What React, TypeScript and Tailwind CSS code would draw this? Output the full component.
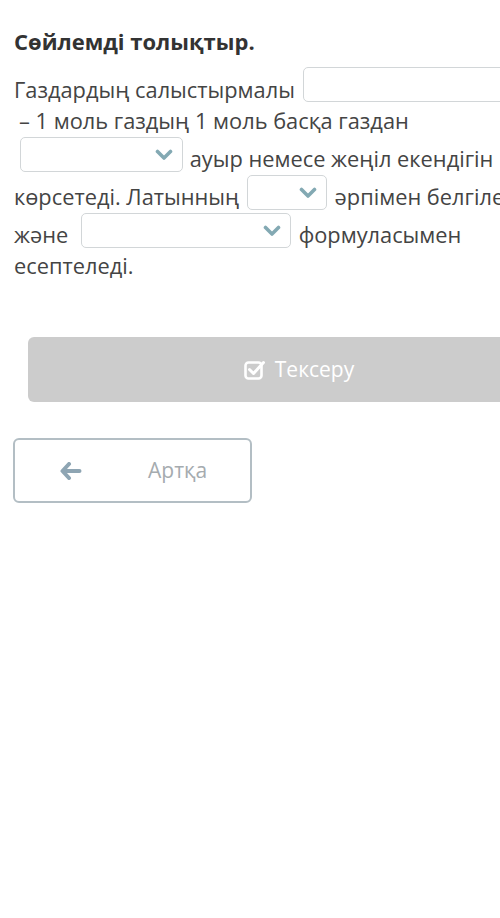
import React from "react";

function Chevron() {
  return (
    <svg width="18" height="12" viewBox="0 0 18 12" className="absolute right-[9px] top-[11px]">
      <path d="M2.5 2.5 L9 9 L15.5 2.5" fill="none" stroke="#83a9b3" strokeWidth="3.6" strokeLinecap="round" strokeLinejoin="round" />
    </svg>
  );
}

function Select({ w }: { w: string }) {
  return (
    <span className={`relative inline-block h-[35px] my-[1px] align-[-6px] rounded-[5px] border border-[#d2d6d8] bg-white ${w}`}>
      <Chevron />
    </span>
  );
}

export default function App() {
  return (
    <div className="w-[500px] h-[918px] overflow-hidden bg-white" style={{ fontFamily: '"Open Sans", sans-serif' }}>
      <div className="w-[600px] pl-[14px] pt-[26px]">
        <h1 className="text-[22px] font-bold text-[#333] leading-[30px]">Сөйлемді толықтыр.</h1>
        <p className="mt-[10px] w-[551px] text-[21.8px] leading-[31px] text-[#444]">
          Газдардың салыстырмалы{" "}
          <span className="ml-[2px] inline-block h-[35px] w-[250px] my-[1px] align-[-5px] rounded-[5px] border border-[#d2d6d8] bg-white"></span>{" "}
          <span className="ml-[5px]">– 1 моль газдың 1 моль басқа газдан</span>{" "}
          <Select w="w-[163px] ml-[6px] mr-[1px]" /> ауыр немесе жеңіл екендігін көрсетеді. Латынның{" "}
          <Select w="w-[80px] mx-[2px]" /> әрпімен белгіленеді және{" "}
          <Select w="w-[210px] ml-[7px] mr-[2px]" /> формуласымен есептеледі.
        </p>
        <button className="mt-[56px] ml-[14px] flex h-[65px] w-[542px] items-center justify-center gap-[9px] rounded-[6px] bg-[#cccccc] text-[21px] text-white">
          <svg width="22" height="20" viewBox="0 0 22 20">
            <rect x="1.5" y="2.5" width="16" height="16" rx="3" fill="none" stroke="white" strokeWidth="2.6" />
            <path d="M5.5 9.5 L9.5 13.5 L19.5 2.5" fill="none" stroke="white" strokeWidth="3" strokeLinecap="round" strokeLinejoin="round" />
          </svg>
          <span>Тексеру</span>
        </button>
        <button className="mt-[36px] -ml-[1px] flex h-[65px] w-[239px] items-center rounded-[6px] border-2 border-[#b3bec4] bg-white text-[21px] text-[#a5abaf]">
          <svg width="22" height="18" viewBox="0 0 22 18" className="ml-[45px]">
            <path d="M9 2 L2.5 9 L9 16 M3 9 H19.5" fill="none" stroke="#8ea5b3" strokeWidth="4" strokeLinecap="round" strokeLinejoin="round" />
          </svg>
          <span className="ml-[66px]">Артқа</span>
        </button>
      </div>
    </div>
  );
}
